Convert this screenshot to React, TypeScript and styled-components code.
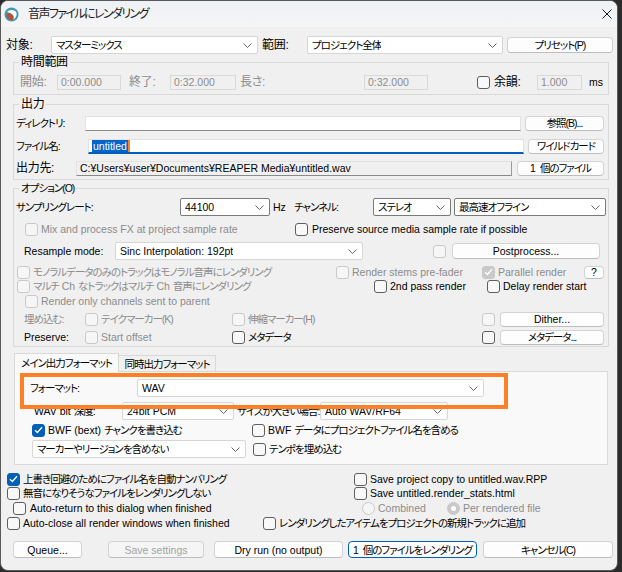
import React from "react";
import styled, { createGlobalStyle } from "styled-components";

const GlobalStyle = createGlobalStyle`
  html, body {
    margin: 0;
    padding: 0;
    background: #2b2b2b;
  }
  body {
    font-family: "Liberation Sans", "Noto Sans CJK JP", sans-serif;
    font-size: 10.5px;
    font-feature-settings: "palt";
    line-height: 14px;
  }
  * {
    box-sizing: border-box;
  }
`;

// kana runs: MS UI Gothic kana are much narrower than Noto's, so tighten them
const J = styled.span`
  font-size: 10.5px;
  letter-spacing: -1px;
`;

// kanji-only labels keep their full width
const K = styled.span`
  font-size: 12px;
  letter-spacing: -0.3px;
`;

const Num = styled.span`
  margin-right: 4px;
`;

const Window = styled.div`
  position: relative;
  width: 618px;
  height: 571px;
  background: #f0f0f0;
  border: 1px solid #5a5a5a;
  border-radius: 8px;
  overflow: hidden;
  display: flex;
  flex-direction: column;
  color: #000;
`;

const TitleBar = styled.div`
  flex: none;
  height: 26px;
  display: flex;
  align-items: center;
  padding-left: 3px;
  background: linear-gradient(#eef1f5, #f5f5f6);
`;

const TitleText = styled.div`
  margin-left: 9px;
  font-size: 12px;
  letter-spacing: -1.6px;
  color: #1a1a1a;
`;

const CloseBtn = styled.div`
  margin-left: auto;
  margin-right: 5px;
  width: 10px;
  height: 10px;
  display: flex;
`;

const Row = styled.div<{ $mt?: number; $h: number }>`
  flex: none;
  display: flex;
  align-items: center;
  height: ${(p) => p.$h}px;
  margin-top: ${(p) => p.$mt ?? 0}px;
`;

const Label = styled.div<{ $ml?: number; $w?: number; $dim?: boolean }>`
  flex: none;
  margin-left: ${(p) => p.$ml ?? 0}px;
  width: ${(p) => (p.$w ? `${p.$w}px` : "auto")};
  white-space: nowrap;
  overflow: hidden;
  color: ${(p) => (p.$dim ? "#8c8c8c" : "#000")};
`;

const ComboBox = styled.div<{ $ml?: number; $w: number; $h: number; $edit?: boolean }>`
  flex: none;
  margin-left: ${(p) => p.$ml ?? 0}px;
  width: ${(p) => p.$w}px;
  height: ${(p) => p.$h}px;
  display: flex;
  align-items: center;
  padding-left: 4px;
  background: #fff;
  border: 1px solid ${(p) => (p.$edit ? "#7a7a7a" : "#d6d6d6")};
  border-radius: 2px;
`;

const ComboText = styled.span`
  white-space: nowrap;
  overflow: hidden;
`;

const ChevronWrap = styled.span`
  margin-left: auto;
  margin-right: 5px;
  display: flex;
`;

const Btn = styled.div<{ $ml?: number; $w: number; $h?: number; $primary?: boolean; $off?: boolean }>`
  flex: none;
  margin-left: ${(p) => p.$ml ?? 0}px;
  width: ${(p) => p.$w}px;
  height: ${(p) => p.$h ?? 16}px;
  display: flex;
  align-items: center;
  justify-content: center;
  white-space: nowrap;
  background: ${(p) => (p.$off ? "#f5f5f5" : "#fdfdfd")};
  border: 1px solid ${(p) => (p.$primary ? "#005fb8" : "#d3d3d3")};
  border-bottom-color: ${(p) => (p.$primary ? "#005fb8" : "#bdbdbd")};
  border-radius: 4px;
  color: ${(p) => (p.$off ? "#a3a3a3" : "#000")};
`;

const TextBox = styled.div<{ $ml?: number; $w: number; $kind: "ro" | "white" | "focus" | "path" }>`
  flex: none;
  margin-left: ${(p) => p.$ml ?? 0}px;
  width: ${(p) => p.$w}px;
  height: 15px;
  display: flex;
  align-items: center;
  padding-left: 3px;
  white-space: nowrap;
  overflow: hidden;
  background: ${(p) => (p.$kind === "white" || p.$kind === "focus" ? "#fff" : "#f0f0f0")};
  border: 1px solid ${(p) => (p.$kind === "ro" ? "#d9d9d9" : "#e2e2e2")};
  border-bottom: ${(p) =>
    p.$kind === "focus" ? "2px solid #005fb8" : p.$kind === "ro" ? "1px solid #d9d9d9" : "1px solid #8a8a8a"};
  border-right-color: ${(p) => (p.$kind === "path" ? "#9a9a9a" : undefined)};
  color: ${(p) => (p.$kind === "ro" ? "#8c8c8c" : "#000")};
`;

const Selected = styled.span`
  background: #0066cc;
  color: #fff;
  padding: 0 1px;
  border-right: 2px solid #ff7f27;
  line-height: 12px;
`;

const Box = styled.span<{ $checked?: boolean; $off?: boolean; $round?: boolean }>`
  flex: none;
  width: 13px;
  height: 13px;
  border-radius: ${(p) => (p.$round ? "50%" : "3px")};
  border: 1px solid ${(p) => (p.$off ? "#c9c9c9" : p.$checked ? "#005fb8" : "#5e5e5e")};
  background: ${(p) => (p.$checked ? (p.$off ? "#c9c9c9" : "#005fb8") : p.$off ? "#f6f6f6" : "#f8f8f8")};
  display: flex;
  align-items: center;
  justify-content: center;
`;

const Item = styled.div<{ $ml?: number; $w?: number; $dim?: boolean; $gap?: number }>`
  flex: none;
  margin-left: ${(p) => p.$ml ?? 0}px;
  width: ${(p) => (p.$w ? `${p.$w}px` : "auto")};
  display: flex;
  align-items: center;
  gap: ${(p) => p.$gap ?? 3}px;
  white-space: nowrap;
  color: ${(p) => (p.$dim ? "#8c8c8c" : "#000")};
`;

const Dot = styled.span`
  width: 5px;
  height: 5px;
  border-radius: 50%;
  background: #fff;
`;

const Group = styled.fieldset<{ $mt: number; $pb: number }>`
  flex: none;
  min-width: 0;
  margin: ${(p) => p.$mt}px 0 0 12px;
  width: 596px;
  padding: 0 0 ${(p) => p.$pb}px 0;
  border: 1px solid #d9d9d9;
`;

const Legend = styled.legend`
  margin-left: 5px;
  padding: 0 2px;
  height: 14px;
  line-height: 14px;
`;

const TabStrip = styled.div`
  flex: none;
  display: flex;
  align-items: flex-end;
  height: 19px;
  margin: 6px 0 0 13px;
  position: relative;
  z-index: 1;
`;

const Tab = styled.div<{ $active?: boolean; $w: number }>`
  width: ${(p) => p.$w}px;
  height: ${(p) => (p.$active ? 19 : 17)}px;
  display: flex;
  align-items: center;
  justify-content: center;
  white-space: nowrap;
  background: ${(p) => (p.$active ? "#f9f9f9" : "#f0f0f0")};
  border: 1px solid #d9d9d9;
  border-bottom: ${(p) => (p.$active ? "none" : "1px solid #d9d9d9")};
  border-left: ${(p) => (p.$active ? "1px solid #d9d9d9" : "none")};
`;

const Panel = styled.div`
  flex: none;
  width: 594px;
  height: 94px;
  margin: -1px 0 0 13px;
  background: #f9f9f9;
  border: 1px solid #d9d9d9;
`;

const Highlight = styled.div`
  position: absolute;
  left: 19px;
  top: 372px;
  width: 488px;
  height: 36px;
  border: 4px solid #ff7f27;
  pointer-events: none;
`;

const Chevron = () => (
  <svg width="9" height="5" viewBox="0 0 9 5">
    <path d="M0.5 0.5 L4.5 4.5 L8.5 0.5" fill="none" stroke="#666" strokeWidth="1" />
  </svg>
);

const Tick = () => (
  <svg width="9" height="8" viewBox="0 0 9 8">
    <path d="M1 4.2 L3.4 6.5 L8 1.2" fill="none" stroke="#fff" strokeWidth="1.3" />
  </svg>
);

const Combo = ({
  ml,
  w,
  h = 18,
  edit,
  children,
}: {
  ml?: number;
  w: number;
  h?: number;
  edit?: boolean;
  children: React.ReactNode;
}) => (
  <ComboBox $ml={ml} $w={w} $h={h} $edit={edit}>
    <ComboText>{children}</ComboText>
    <ChevronWrap>
      <Chevron />
    </ChevronWrap>
  </ComboBox>
);

const Check = ({
  ml,
  w,
  checked,
  off,
  dim,
  gap,
  children,
}: {
  ml?: number;
  w?: number;
  checked?: boolean;
  off?: boolean;
  dim?: boolean;
  gap?: number;
  children?: React.ReactNode;
}) => (
  <Item $ml={ml} $w={w} $dim={dim ?? off} $gap={gap}>
    <Box $checked={checked} $off={off}>
      {checked && <Tick />}
    </Box>
    {children && <span>{children}</span>}
  </Item>
);

const Radio = ({ ml, w, on, children }: { ml?: number; w?: number; on?: boolean; children: React.ReactNode }) => (
  <Item $ml={ml} $w={w} $dim>
    <Box $round $off $checked={on}>
      {on && <Dot />}
    </Box>
    <span>{children}</span>
  </Item>
);

const ReaperLogo = () => (
  <svg width="15" height="15" viewBox="0 0 15 15">
    <circle cx="7.5" cy="7.5" r="7" fill="#3d9bb3" />
    <path d="M3 5.2 C4.6 2.6 9.6 2 11.8 4.6 C13.4 6.6 12.8 10.6 9.4 12.6 C10.6 10 10 6.4 3 5.2 Z" fill="#fff" />
    <path d="M3.6 5.8 C8.6 6.4 10.4 9.4 8.6 13.3 C6 13.7 3.4 12 2.6 9.6 C2.3 8.2 2.6 6.8 3.6 5.8 Z" fill="#b5533c" />
  </svg>
);

const CloseIcon = () => (
  <svg width="10" height="10" viewBox="0 0 10 10">
    <path d="M0.5 0.5 L9.5 9.5 M9.5 0.5 L0.5 9.5" stroke="#1a1a1a" strokeWidth="1" />
  </svg>
);

export default function App() {
  return (
    <>
      <GlobalStyle />
      <Window>
        <TitleBar>
          <ReaperLogo />
          <TitleText>音声ファイルにレンダリング</TitleText>
          <CloseBtn>
            <CloseIcon />
          </CloseBtn>
        </TitleBar>

        <Row $mt={9} $h={18}>
          <Label $ml={5} $w={45}><K>対象:</K></Label>
          <Combo w={207}><J>マスターミックス</J></Combo>
          <Label $ml={4} $w={45}><K>範囲:</K></Label>
          <Combo w={196}><J>プロジェクト全体</J></Combo>
          <Btn $ml={4} $w={106}><J>プリセット(P)</J></Btn>
        </Row>

        <Group $mt={1} $pb={4}>
          <Legend><K>時間範囲</K></Legend>
          <Row $mt={5} $h={16}>
            <Label $ml={6} $w={37} $dim><K>開始:</K></Label>
            <TextBox $w={64} $kind="ro">0:00.000</TextBox>
            <Label $ml={8} $w={41} $dim><K>終了:</K></Label>
            <TextBox $w={66} $kind="ro">0:32.000</TextBox>
            <Label $ml={4} $w={124} $dim><K>長さ:</K></Label>
            <TextBox $w={64} $kind="ro">0:32.000</TextBox>
            <Check ml={49} w={60} gap={4}><K>余韻:</K></Check>
            <TextBox $w={45} $kind="ro">1.000</TextBox>
            <Label $ml={7}>ms</Label>
          </Row>
        </Group>

        <Group $mt={2} $pb={3}>
          <Legend><K>出力</K></Legend>
          <Row $mt={4} $h={16}>
            <Label $ml={2} $w={69}><J>ディレクトリ:</J></Label>
            <TextBox $w={436} $kind="white" />
            <Btn $ml={4} $w={79} $h={15}><J>参照(B)...</J></Btn>
          </Row>
          <Row $mt={7} $h={16}>
            <Label $ml={2} $w={72}><J>ファイル名:</J></Label>
            <TextBox $w={436} $kind="focus">
              <Selected>untitled</Selected>
            </TextBox>
            <Btn $ml={4} $w={76} $h={15}><J>ワイルドカード</J></Btn>
          </Row>
          <Row $mt={6} $h={16}>
            <Label $ml={2} $w={60}><K>出力先:</K></Label>
            <TextBox $w={436} $kind="path">C:¥Users¥user¥Documents¥REAPER Media¥untitled.wav</TextBox>
            <Btn $ml={5} $w={87} $h={15}><Num>1</Num><J>個のファイル</J></Btn>
          </Row>
        </Group>

        <Group $mt={1} $pb={2}>
          <Legend><J>オプション(O)</J></Legend>
          <Row $mt={3} $h={18}>
            <Label $ml={2} $w={164}><J>サンプリングレート:</J></Label>
            <Combo w={90} edit>44100</Combo>
            <Label $ml={3} $w={21}>Hz</Label>
            <Label $w={79}><J>チャンネル:</J></Label>
            <Combo w={78} edit><J>ステレオ</J></Combo>
            <Combo ml={3} w={152} edit><J>最高速オフライン</J></Combo>
          </Row>
          <Row $mt={6} $h={14}>
            <Check ml={11} w={270} off>Mix and process FX at project sample rate</Check>
            <Check gap={4}>Preserve source media sample rate if possible</Check>
          </Row>
          <Row $mt={6} $h={18}>
            <Label $ml={10} $w={91}>Resample mode:</Label>
            <Combo w={248}>Sinc Interpolation: 192pt</Combo>
            <Check ml={70} off />
            <Btn $ml={6} $w={148}>Postprocess...</Btn>
          </Row>
          <Row $mt={5} $h={14}>
            <Check ml={3} w={319} off><J>モノラルデータのみのトラックはモノラル音声にレンダリング</J></Check>
            <Check w={146} off>Render stems pre-fader</Check>
            <Check w={102} off checked>Parallel render</Check>
            <Btn $w={20} $h={13}>?</Btn>
          </Row>
          <Row $h={14}>
            <Check ml={3} w={357} off>
              <J>マルチ</J> Ch <J>なトラックはマルチ</J> Ch <J>音声にレンダリング</J>
            </Check>
            <Check w={113}>2nd pass render</Check>
            <Check>Delay render start</Check>
          </Row>
          <Row $mt={1} $h={14}>
            <Check ml={11} off>Render only channels sent to parent</Check>
          </Row>
          <Row $mt={4} $h={14}>
            <Label $ml={10} $w={61} $dim><J>埋め込む:</J></Label>
            <Check w={147} off><J>テイクマーカー(K)</J></Check>
            <Check w={250} off><J>伸縮マーカー(H)</J></Check>
            <Check off />
            <Btn $ml={5} $w={104} $h={15}>Dither...</Btn>
          </Row>
          <Row $mt={4} $h={14}>
            <Label $ml={10} $w={61}>Preserve:</Label>
            <Check w={147} off>Start offset</Check>
            <Check w={250}><J>メタデータ</J></Check>
            <Check />
            <Btn $ml={5} $w={104} $h={15}><J>メタデータ...</J></Btn>
          </Row>
        </Group>

        <TabStrip>
          <Tab $active $w={105}><J>メイン出力フォーマット</J></Tab>
          <Tab $w={97}><J>同時出力フォーマット</J></Tab>
        </TabStrip>
        <Panel>
          <Row $mt={7} $h={18}>
            <Label $ml={15} $w={107}><J>フォーマット:</J></Label>
            <Combo w={347}>WAV</Combo>
          </Row>
          <Row $mt={5} $h={18}>
            <Label $ml={19} $w={88}>WAV bit <J>深度:</J></Label>
            <Combo w={112}>24bit PCM</Combo>
            <Label $ml={3} $w={83}><J>サイズが大きい場合:</J></Label>
            <Combo w={128}>Auto WAV/RF64</Combo>
          </Row>
          <Row $mt={3} $h={14}>
            <Check ml={17} w={220} checked>BWF (bext) <J>チャンクを書き込む</J></Check>
            <Check>BWF <J>データにプロジェクトファイル名を含める</J></Check>
          </Row>
          <Row $mt={3} $h={18}>
            <Combo ml={17} w={214}><J>マーカーやリージョンを含めない</J></Combo>
            <Check ml={7}><J>テンポを埋め込む</J></Check>
          </Row>
        </Panel>

        <Row $mt={7} $h={14}>
          <Check ml={6} w={347} checked><J>上書き回避のためにファイル名を自動ナンバリング</J></Check>
          <Check>Save project copy to untitled.wav.RPP</Check>
        </Row>
        <Row $h={14}>
          <Check ml={6} w={347}><J>無音になりそうなファイルをレンダリングしない</J></Check>
          <Check>Save untitled.render_stats.html</Check>
        </Row>
        <Row $mt={1} $h={14}>
          <Check ml={12} w={349} gap={4}>Auto-return to this dialog when finished</Check>
          <Radio w={85}>Combined</Radio>
          <Radio on>Per rendered file</Radio>
        </Row>
        <Row $mt={1} $h={14}>
          <Check ml={6} w={256}>Auto-close all render windows when finished</Check>
          <Check><J>レンダリングしたアイテムをプロジェクトの新規トラックに追加</J></Check>
        </Row>
        <Row $mt={11} $h={17}>
          <Btn $ml={12} $w={69} $h={17}>Queue...</Btn>
          <Btn $ml={26} $w={96} $h={17} $off>Save settings</Btn>
          <Btn $ml={10} $w={129} $h={17}>Dry run (no output)</Btn>
          <Btn $ml={5} $w={129} $h={17} $primary><Num>1</Num><J>個のファイルをレンダリング</J></Btn>
          <Btn $ml={6} $w={130} $h={17}><J>キャンセル(C)</J></Btn>
        </Row>

        <Highlight />
      </Window>
    </>
  );
}
